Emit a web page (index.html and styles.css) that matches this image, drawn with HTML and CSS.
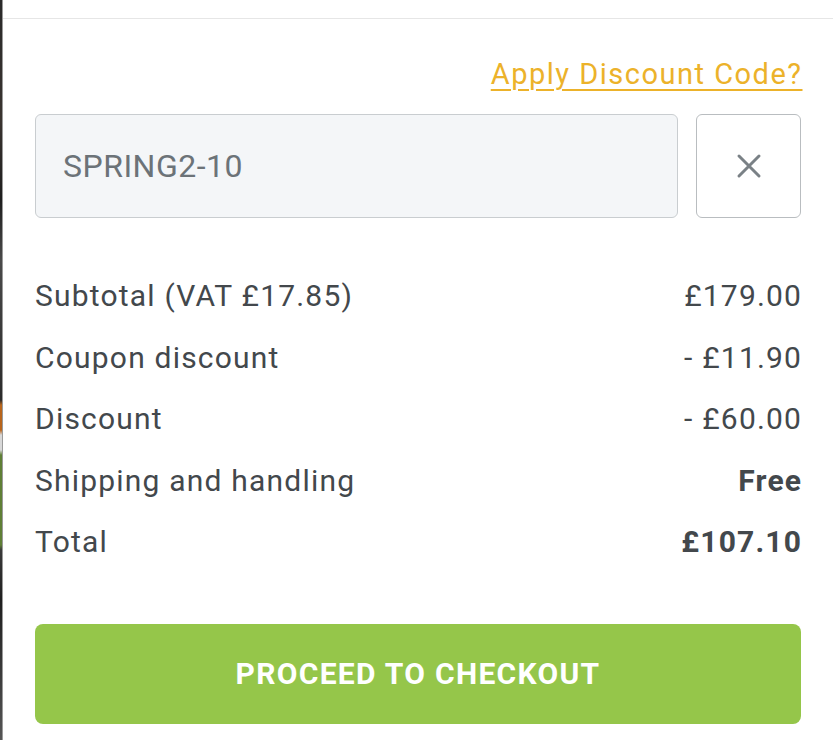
FILE: index.html
```html
<!DOCTYPE html>
<html lang="en">
<head>
    <meta charset="UTF-8">
    <meta name="viewport" content="width=device-width, initial-scale=1.0">
    <title>Basket Summary</title>
    <link rel="stylesheet" href="styles.css">
</head>
<body>
    <div class="page">
        <div class="edge"></div>
        <div class="panel">
            <div class="apply">
                <a href="#" class="apply-link">Apply Discount Code?</a>
            </div>

            <form class="coupon" id="couponForm">
                <input type="text" class="coupon-input" value="SPRING2-10" aria-label="Discount code">
                <button type="button" class="coupon-clear" aria-label="Remove code">
                    <svg width="26" height="26" viewBox="0 0 26 26">
                        <path d="M3 3 L23 23 M23 3 L3 23" stroke="#7a8186" stroke-width="3" stroke-linecap="round" fill="none"/>
                    </svg>
                </button>
            </form>

            <div class="summary">
                <div class="row"><span>Subtotal (VAT £17.85)</span><span class="value">£179.00</span></div>
                <div class="row"><span>Coupon discount</span><span class="value">- £11.90</span></div>
                <div class="row"><span>Discount</span><span class="value">- £60.00</span></div>
                <div class="row"><span>Shipping and handling</span><span class="value strong">Free</span></div>
                <div class="row"><span>Total</span><span class="value strong">£107.10</span></div>
            </div>

            <button type="button" class="checkout">PROCEED TO CHECKOUT</button>
        </div>
    </div>
</body>
</html>
```

FILE: styles.css
```css
body {
    margin: 0;
    padding: 0;
    background-color: #fff;
    font-family: Roboto, "Liberation Sans", sans-serif;
    color: #43484c;
}

.page {
    display: flex;
    min-height: 740px;
}

.edge {
    width: 2px;
    flex-shrink: 0;
    border-right: 1px solid #9a9a9a;
    background: linear-gradient(to bottom,
        #2a2a2a 0, #3a3430 120px, #1e1e1e 200px, #4a4a4a 260px,
        #2b2b2b 400px, #b8651c 405px, #b8651c 430px, #d8d8d8 435px,
        #d8d8d8 450px, #5f7f36 455px, #5f7f36 545px, #3a3a3a 550px,
        #1f1f1f 600px, #555 740px);
}

.panel {
    flex: 1;
    margin-top: 18px;
    border-top: 1px solid #e6e6e6;
    padding: 0 32px 0 32px;
}

.apply {
    text-align: right;
    margin-top: 35px;
    line-height: 40px;
}

.apply-link {
    color: #ecb22a;
    font-size: 29px;
    letter-spacing: 1.5px;
    margin-right: -1.5px;
    text-decoration: underline;
    text-underline-offset: 5px;
    text-decoration-thickness: 2px;
}

.coupon {
    display: flex;
    gap: 18px;
    margin: 15px 0 0 0;
}

.coupon-input {
    flex: 1;
    height: 104px;
    box-sizing: border-box;
    padding: 0 27px;
    border: 1px solid #c9cdd0;
    border-radius: 6px;
    background-color: #f4f6f8;
    font-family: Roboto, sans-serif;
    font-size: 32px;
    letter-spacing: 0.5px;
    color: #6c7378;
    outline: none;
}

.coupon-clear {
    width: 105px;
    height: 104px;
    box-sizing: border-box;
    border: 1px solid #b9bdc0;
    border-radius: 6px;
    background-color: #fff;
    display: flex;
    align-items: center;
    justify-content: center;
    cursor: pointer;
    padding: 0;
}

.summary {
    margin-top: 47px;
}

.row {
    display: flex;
    justify-content: space-between;
    font-size: 30px;
    letter-spacing: 1.2px;
    line-height: 61.5px;
}

.value {
    margin-right: -1.2px;
}

.strong {
    font-weight: 700;
}

.checkout {
    display: block;
    width: 100%;
    height: 100px;
    margin-top: 51px;
    border: none;
    border-radius: 8px;
    background-color: #95c64a;
    color: #fff;
    font-family: Roboto, sans-serif;
    font-size: 30px;
    font-weight: 700;
    letter-spacing: 1.3px;
    cursor: pointer;
}
```
